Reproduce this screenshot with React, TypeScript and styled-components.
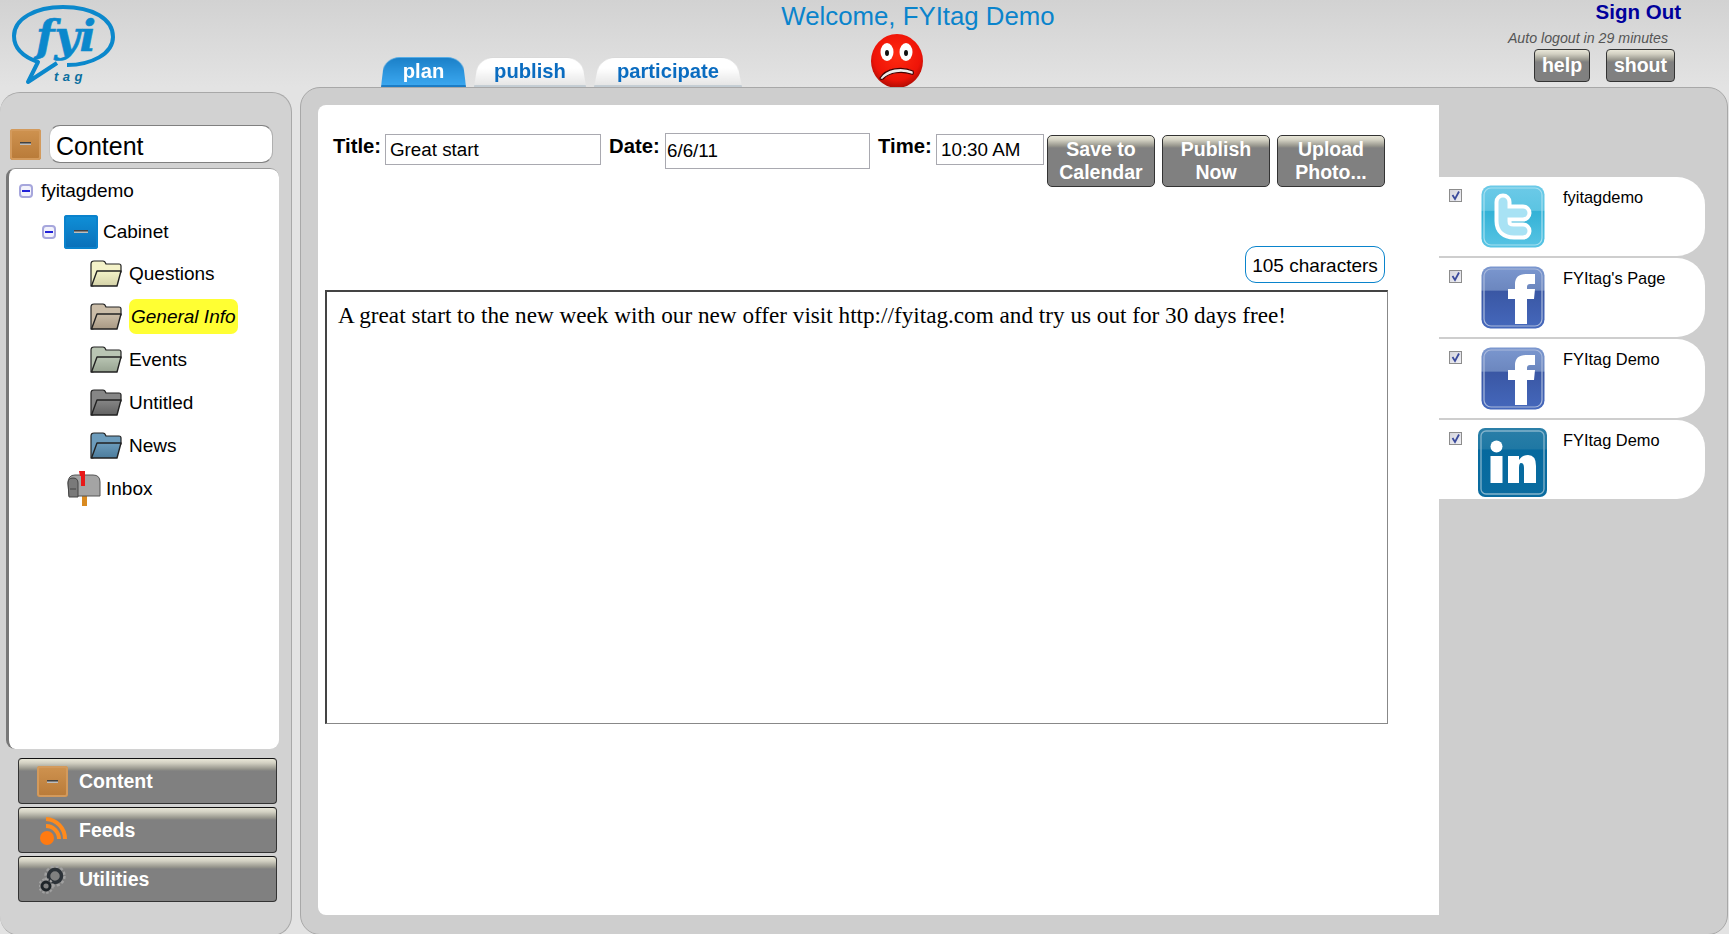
import React from "react";
import styled, { createGlobalStyle } from "styled-components";

const GlobalStyle = createGlobalStyle`
  html, body {
    margin: 0;
    padding: 0;
    width: 1729px;
    height: 934px;
    overflow: hidden;
    background: #e3e3e3;
    font-family: "Liberation Sans", Arial, sans-serif;
    color: #000;
  }
`;

const Page = styled.div`
  width: 1729px;
  height: 934px;
  overflow: hidden;
  background: #e3e3e3;
`;

/* ---------- header ---------- */
const Header = styled.header`
  display: flex;
  height: 87px;
  background: linear-gradient(#d2d2d2, #e3e3e3);
`;
const LogoBox = styled.div`
  width: 105px;
  height: 81px;
  margin: 4px 0 0 11px;
`;
const Tabs = styled.nav`
  display: flex;
  align-self: flex-end;
  width: 367px;
  height: 31px;
  margin-left: 262px;
  gap: 2px;
`;
const Tab = styled.div<{ $active?: boolean; $width: number }>`
  position: relative;
  width: ${(p) => p.$width}px;
  height: 31px;
  line-height: 31px;
  text-align: center;
  font-size: 20.2px;
  font-weight: bold;
  color: ${(p) => (p.$active ? "#fff" : "#0a6cc0")};
  &::before {
    content: "";
    position: absolute;
    inset: -2px 3px 0;
    border-radius: 16px 16px 0 0;
    transform: perspective(50px) rotateX(8deg);
    transform-origin: bottom;
    background: ${(p) =>
      p.$active ? "linear-gradient(#1b80c8, #3aa6ee)" : "linear-gradient(#fff, #fff 40%, #e6e6e6)"};
    border-top: 1px solid ${(p) => (p.$active ? "#58aee6" : "#d8d8d8")};
    border-bottom: 2px solid ${(p) => (p.$active ? "#1c7cc4" : "#c4cdd4")};
    box-sizing: border-box;
  }
`;
const TabLabel = styled.span`
  position: relative;
`;
const Center = styled.div`
  display: flex;
  flex-direction: column;
  align-items: center;
  width: 346px;
`;
const Welcome = styled.div`
  margin-top: 2px;
  font-size: 25.8px;
  line-height: 29px;
  color: #0a84cc;
  white-space: nowrap;
`;
const SmileyBox = styled.div`
  margin: 3px 42px 0 0;
`;
const Account = styled.div`
  display: flex;
  flex-direction: column;
  align-items: flex-end;
  margin-left: auto;
  padding-right: 54px;
`;
const SignOut = styled.div`
  margin: 1px -6px 0 0;
  font-size: 20.5px;
  line-height: 22px;
  font-weight: bold;
  color: #00009c;
`;
const AutoLogout = styled.div`
  margin: 7px 7px 0 0;
  font-size: 14.2px;
  line-height: 16px;
  font-style: italic;
  color: #555;
`;
const HeaderButtons = styled.div`
  display: flex;
  gap: 16px;
  margin-top: 3px;
`;
const glossBackground = "linear-gradient(#e9e7d8, #d2d0c2 4px, #96958c 10px, #808080 12px)";
const SmallButton = styled.div<{ $width: number }>`
  box-sizing: border-box;
  width: ${(p) => p.$width}px;
  height: 33px;
  line-height: 30px;
  text-align: center;
  border: 1px solid #333;
  border-radius: 4px;
  background: ${glossBackground};
  color: #fff;
  font-size: 19.5px;
  font-weight: bold;
`;

/* ---------- body ---------- */
const Body = styled.div`
  display: flex;
  align-items: flex-start;
`;
const LeftPanel = styled.aside`
  box-sizing: border-box;
  width: 292px;
  height: 844px;
  margin-top: 5px;
  padding-top: 32px;
  border: 1px solid #a8a8a8;
  border-left: 0;
  border-radius: 20px;
  background: #d2d2d2;
`;
const ContentHead = styled.div`
  display: flex;
  align-items: center;
  margin-left: 10px;
  gap: 8px;
  height: 38px;
`;
const ContentTitle = styled.div`
  box-sizing: border-box;
  width: 224px;
  height: 38px;
  padding: 2px 0 0 6px;
  line-height: 36px;
  font-size: 25px;
  background: #fff;
  border-top: 1px solid #808080;
  border-bottom: 1px solid #808080;
  border-left: 1px solid #c4c4c4;
  border-right: 1px solid #b0b0b0;
  border-radius: 11px;
`;
const Tree = styled.div`
  box-sizing: border-box;
  width: 273px;
  height: 581px;
  margin: 5px 0 0 6px;
  background: #fff;
  border-left: 3px solid #777;
  border-top: 1px solid #999;
  border-radius: 9px;
`;
const TreeRow = styled.div<{ $indent: number; $gap: number; $tight?: boolean }>`
  display: flex;
  align-items: center;
  height: ${(p) => (p.$tight ? 41 : 43)}px;
  margin-top: ${(p) => (p.$tight ? "-1px" : "0")};
  padding-left: ${(p) => p.$indent}px;
  gap: ${(p) => p.$gap}px;
  font-size: 19px;
`;
const TreeLabel = styled.span<{ $active?: boolean }>`
  ${(p) =>
    p.$active
      ? `
    box-sizing: border-box;
    width: 109px;
    height: 35px;
    line-height: 35px;
    padding-left: 2px;
    font-style: italic;
    white-space: nowrap;
    background: #ffff33;
    border-radius: 7px;
  `
      : ""}
`;
const Expander = styled.span`
  position: relative;
  box-sizing: border-box;
  width: 14px;
  height: 14px;
  border: 2px solid #a6a6dc;
  border-radius: 4px;
  background: #f2f2fb;
  &::after {
    content: "";
    position: absolute;
    left: 1px;
    right: 1px;
    top: 4px;
    height: 2px;
    background: #2222d8;
  }
`;
const Drawer = styled.span<{ $tone: "orange" | "blue" }>`
  position: relative;
  display: block;
  box-sizing: border-box;
  width: ${(p) => (p.$tone === "blue" ? 34 : 31)}px;
  height: ${(p) => (p.$tone === "blue" ? 34 : 31)}px;
  margin-right: ${(p) => (p.$tone === "blue" ? -3 : 0)}px;
  border-radius: 3px;
  background: ${(p) =>
    p.$tone === "blue" ? "linear-gradient(#0f90d8, #0a6fb8)" : "linear-gradient(#cf9350, #b87a38)"};
  box-shadow: inset 0 0 0 2px ${(p) => (p.$tone === "blue" ? "#0a82cc" : "#d39a5c")};
  &::after {
    content: "";
    position: absolute;
    left: 10px;
    right: 10px;
    top: 50%;
    height: 3px;
    margin-top: -2px;
    background: linear-gradient(#222, #ddd);
  }
`;
const NavButtons = styled.div`
  display: flex;
  flex-direction: column;
  gap: 3px;
  width: 259px;
  margin: 9px 0 0 18px;
`;
const NavButton = styled.div`
  box-sizing: border-box;
  display: flex;
  align-items: center;
  height: 46px;
  padding: 1px 0 0 18px;
  gap: 11px;
  border: 1px solid #333;
  border-top-color: #111;
  border-radius: 4px;
  background: ${glossBackground};
  color: #fff;
  font-size: 19.5px;
  font-weight: bold;
`;
const NavIcon = styled.span`
  display: flex;
  justify-content: center;
  width: 31px;
`;

const RightPanel = styled.main`
  box-sizing: border-box;
  display: flex;
  align-items: flex-start;
  width: 1428px;
  height: 848px;
  margin-left: 8px;
  padding: 17px 0 0 17px;
  border: 1px solid #a8a8a8;
  border-radius: 20px;
  background: #cecece;
`;
const Editor = styled.section`
  box-sizing: border-box;
  width: 1121px;
  height: 810px;
  padding: 29px 0 0 15px;
  background: #fff;
  border-radius: 8px 0 0 8px;
`;
const FormRow = styled.div`
  display: flex;
  align-items: flex-start;
  height: 112px;
`;
const FieldLabel = styled.label<{ $left?: number; $width: number }>`
  width: ${(p) => p.$width}px;
  margin: 1px 0 0 ${(p) => p.$left ?? 0}px;
  font-size: 20.3px;
  line-height: 23px;
  font-weight: bold;
`;
const TextField = styled.input<{ $width: number; $tall?: boolean }>`
  box-sizing: border-box;
  width: ${(p) => p.$width}px;
  height: ${(p) => (p.$tall ? 36 : 31)}px;
  margin: ${(p) => (p.$tall ? "-1px" : "0")} 0 0 0;
  padding: ${(p) => (p.$tall ? "0 1px 0" : "1px 4px 0")};
  border: 1px solid #a9a9b0;
  font: 18.8px "Liberation Sans", Arial, sans-serif;
  color: #000;
  background: #fff;
  outline: none;
`;
const ActionButton = styled.div<{ $left: number }>`
  box-sizing: border-box;
  width: 108px;
  height: 52px;
  margin: 1px 0 0 ${(p) => p.$left}px;
  padding-top: 2px;
  text-align: center;
  font-size: 19.5px;
  line-height: 23px;
  font-weight: bold;
  color: #fff;
  border: 1px solid #333;
  border-radius: 5px;
  background: ${glossBackground};
`;
const CountRow = styled.div`
  display: flex;
  justify-content: flex-end;
  width: 1052px;
`;
const CharCount = styled.div`
  box-sizing: border-box;
  width: 140px;
  height: 37px;
  padding-top: 1px;
  line-height: 35px;
  text-align: center;
  font-size: 19px;
  border: 1px solid #0a84cc;
  border-radius: 11px;
`;
const Message = styled.textarea`
  display: block;
  box-sizing: border-box;
  width: 1063px;
  height: 434px;
  margin: 7px 0 0 -8px;
  padding: 10px 11px;
  border-style: solid;
  border-width: 2px 1px 1px 2px;
  border-color: #444 #888 #888 #444;
  font: 23.2px/26px "Liberation Serif", "Times New Roman", serif;
  color: #000;
  resize: none;
  outline: none;
`;
const Accounts = styled.ul`
  display: flex;
  flex-direction: column;
  gap: 2px;
  width: 266px;
  margin: 72px 0 0;
  padding: 0;
  list-style: none;
`;
const AccountRow = styled.li`
  display: grid;
  grid-template-columns: 13px 101px 1fr;
  align-items: start;
  box-sizing: border-box;
  height: 79px;
  padding-left: 10px;
  background: #fff;
  border-radius: 0 28px 28px 0;
`;
const CheckMark = styled.span`
  display: flex;
  align-items: center;
  justify-content: center;
  box-sizing: border-box;
  width: 13px;
  height: 13px;
  margin-top: 12px;
  border: 1px solid #8c8c8c;
  background: linear-gradient(135deg, #d4d4dc, #f0f0f4);
`;
const IconCell = styled.span`
  display: flex;
  justify-content: center;
  padding-top: 8px;
`;
const AccountName = styled.span`
  margin-top: 10px;
  font-size: 16.4px;
  line-height: 20px;
  white-space: nowrap;
`;
const SvgBlock = styled.svg`
  display: block;
  flex: none;
`;
const LinkedInSvg = styled(SvgBlock)`
  margin-top: 0;
`;

/* ---------- drawings ---------- */
const Logo = () => (
  <SvgBlock width="105" height="81" viewBox="0 0 105 81">
    <path
      d="M46 59 L17 78 L27 58 C10 52 3 43 3 32 C3 15 24 3 52 3 C82 3 102 15 102 33 C102 50 80 61 56 61"
      fill="none"
      stroke="#0b88cc"
      strokeWidth="4"
      strokeLinejoin="round"
    />
    <text
      x="25"
      y="47"
      fill="#0b88cc"
      stroke="#0b88cc"
      strokeWidth="0.6"
      fontFamily="'DejaVu Serif', serif"
      fontStyle="italic"
      fontWeight="bold"
      fontSize="42"
      textLength="60"
      lengthAdjust="spacingAndGlyphs"
    >
      fyi
    </text>
    <text x="43" y="77" fill="#0b6f9f" fontFamily="'Liberation Sans', sans-serif" fontStyle="italic" fontWeight="bold" fontSize="13" letterSpacing="4.5">
      tag
    </text>
  </SvgBlock>
);

const Smiley = () => (
  <SvgBlock width="54" height="54" viewBox="0 0 54 54">
    <defs>
      <radialGradient id="ball" cx="0.5" cy="0.4" r="0.6">
        <stop offset="0" stopColor="#ff2a10" />
        <stop offset="0.75" stopColor="#ee1408" />
        <stop offset="1" stopColor="#b00c04" />
      </radialGradient>
    </defs>
    <ellipse cx="27" cy="27" rx="26" ry="27" fill="url(#ball)" />
    <ellipse cx="17" cy="18" rx="6.5" ry="9" fill="#fff" />
    <ellipse cx="36" cy="18" rx="6.5" ry="9" fill="#fff" />
    <ellipse cx="17" cy="19" rx="2" ry="3" fill="#111" />
    <ellipse cx="36" cy="19" rx="2" ry="3" fill="#111" />
    <path d="M10 44 C16 34 32 32 43 37 C44 40 43 41 41 40 C32 37 20 38 13 45 C11 46 10 45 10 44 Z" fill="#eee" stroke="#400" strokeWidth="1.2" />
  </SvgBlock>
);

const Folder = ({ id, tint, shade }: { id: string; tint: string; shade: string }) => (
  <SvgBlock width="32" height="27" viewBox="0 0 32 27">
    <defs>
      <linearGradient id={id} x1="0" y1="0" x2="0" y2="1">
        <stop offset="0" stopColor={tint} />
        <stop offset="1" stopColor={shade} />
      </linearGradient>
    </defs>
    <path d="M1 26 V4 Q1 1 4 1 H13 Q15 1 16 4 H29 Q31 4 31 6 V12 H8 L3 26 Z" fill={tint} stroke="#222" strokeWidth="1.2" />
    <path d="M7 11 H31 L27 26 H1.5 Z" fill={`url(#${id})`} stroke="#222" strokeWidth="1.4" strokeLinejoin="round" />
  </SvgBlock>
);

const Mailbox = () => (
  <SvgBlock width="34" height="35" viewBox="0 0 34 35">
    <rect x="15" y="24" width="5" height="11" fill="#d98a20" />
    <path d="M1 12 Q1 4 8 4 H26 Q33 4 33 11 V25 H2 Z" fill="#a4a4a4" stroke="#555" />
    <path d="M1 12 Q1 7 6 7 Q11 7 11 12 V26 H2 Z" fill="#7a7a7a" stroke="#444" />
    <path d="M3 18 H9" stroke="#444" strokeWidth="1" />
    <rect x="14" y="1" width="4" height="14" fill="#e81818" />
    <path d="M12 0 H18 V5 H13 Z" fill="#e81818" />
  </SvgBlock>
);

const Rss = () => (
  <SvgBlock width="28" height="28" viewBox="0 0 28 28">
    <circle cx="8" cy="21" r="7" fill="#ff7a10" />
    <path d="M7 9 A13 13 0 0 1 20 22" fill="none" stroke="#ff8a1c" strokeWidth="4" />
    <path d="M7 2 A20 20 0 0 1 26 22" fill="none" stroke="#ff8a1c" strokeWidth="4" />
  </SvgBlock>
);

const Gears = () => (
  <SvgBlock width="27" height="29" viewBox="0 0 27 29">
    <circle cx="16" cy="11" r="9.5" fill="none" stroke="#a0a0a0" strokeWidth="2.5" strokeDasharray="3 2" />
    <circle cx="16" cy="11" r="6.5" fill="none" stroke="#2c3238" strokeWidth="3.5" />
    <circle cx="7" cy="21" r="6.8" fill="none" stroke="#a0a0a0" strokeWidth="2" strokeDasharray="2.5 1.5" />
    <circle cx="7" cy="21" r="4" fill="none" stroke="#1e2428" strokeWidth="2.8" />
  </SvgBlock>
);

const Twitter = () => (
  <SvgBlock width="64" height="64" viewBox="0 0 64 64">
    <defs>
      <linearGradient id="twBg" x1="0" y1="0" x2="0" y2="1">
        <stop offset="0" stopColor="#6ccae8" />
        <stop offset="0.4" stopColor="#5cc4e2" />
        <stop offset="0.42" stopColor="#33b2d6" />
        <stop offset="1" stopColor="#58c4e4" />
      </linearGradient>
    </defs>
    <rect x="0.5" y="0.5" width="63" height="62" rx="9" fill="url(#twBg)" />
    <rect x="3" y="3" width="58" height="57" rx="7" fill="none" stroke="#a6e0f0" strokeWidth="1.2" />
    <path d="M22 17 V36 Q22 46 33 46 H42 M22 28 H42" fill="none" stroke="#fff" strokeWidth="17" strokeLinecap="round" />
    <path d="M22 17 V36 Q22 46 33 46 H42 M22 28 H42" fill="none" stroke="#a8e2f4" strokeWidth="9" strokeLinecap="round" />
  </SvgBlock>
);

const Facebook = ({ id }: { id: string }) => (
  <SvgBlock width="64" height="64" viewBox="0 0 64 64">
    <defs>
      <linearGradient id={id} x1="0" y1="0" x2="0" y2="1">
        <stop offset="0" stopColor="#7b97cf" />
        <stop offset="0.38" stopColor="#6c87bf" />
        <stop offset="0.4" stopColor="#3a57a4" />
        <stop offset="1" stopColor="#4568bc" />
      </linearGradient>
    </defs>
    <rect x="0.5" y="0.5" width="63" height="62" rx="9" fill={`url(#${id})`} />
    <rect x="3" y="3" width="58" height="57" rx="7" fill="none" stroke="#a9b9dc" strokeWidth="1.2" />
    <path d="M34 58 V33 H27 V23 H34 V18 Q34 8 45 8 H54 V18 H49 Q46 18 46 21 V23 H54 L53 33 H46 V58 Z" fill="#fff" />
  </SvgBlock>
);

const LinkedIn = () => (
  <LinkedInSvg width="69" height="69" viewBox="0 0 69 69">
    <defs>
      <linearGradient id="inBg" x1="0" y1="0" x2="0" y2="1">
        <stop offset="0" stopColor="#2b7fa8" />
        <stop offset="0.3" stopColor="#1f78a4" />
        <stop offset="0.32" stopColor="#06699e" />
        <stop offset="1" stopColor="#0a6ca0" />
      </linearGradient>
    </defs>
    <rect x="0" y="0" width="69" height="69" rx="7" fill="url(#inBg)" />
    <rect x="3" y="3" width="63" height="63" rx="5" fill="none" stroke="#84b4cc" strokeWidth="1.3" />
    <circle cx="18.5" cy="18.5" r="6" fill="#fff" />
    <rect x="12.5" y="28" width="12" height="27" fill="#fff" />
    <path d="M30 28 H41 V32 Q44 27 50 27 Q58 27 58 38 V55 H46 V40 Q46 35 43 35 Q41 35 41 40 V55 H30 Z" fill="#fff" />
  </LinkedInSvg>
);

const Check = () => (
  <svg width="11" height="11" viewBox="0 0 11 11">
    <path d="M2.5 5 L5 9 L9 1.5" fill="none" stroke="#3a4a9c" strokeWidth="1.8" />
  </svg>
);

const folders = [
  { name: "Questions", tint: "#f4f2c8", shade: "#d4d2a8" },
  { name: "General Info", tint: "#cbbda8", shade: "#a89984", active: true },
  { name: "Events", tint: "#b9c5b3", shade: "#97a391" },
  { name: "Untitled", tint: "#868686", shade: "#626262" },
  { name: "News", tint: "#6c9cbc", shade: "#4c7c9c" },
];

const accounts = [
  { name: "fyitagdemo", icon: <Twitter /> },
  { name: "FYItag's Page", icon: <Facebook id="fbA" /> },
  { name: "FYItag Demo", icon: <Facebook id="fbB" /> },
  { name: "FYItag Demo", icon: <LinkedIn /> },
];

const App: React.FC = () => (
  <Page>
    <GlobalStyle />
    <Header>
      <LogoBox>
        <Logo />
      </LogoBox>
      <Tabs>
        <Tab $active $width={91}>
          <TabLabel>plan</TabLabel>
        </Tab>
        <Tab $width={118}>
          <TabLabel>publish</TabLabel>
        </Tab>
        <Tab $width={154}>
          <TabLabel>participate</TabLabel>
        </Tab>
      </Tabs>
      <Center>
        <Welcome>Welcome, FYItag Demo</Welcome>
        <SmileyBox>
          <Smiley />
        </SmileyBox>
      </Center>
      <Account>
        <SignOut>Sign Out</SignOut>
        <AutoLogout>Auto logout in 29 minutes</AutoLogout>
        <HeaderButtons>
          <SmallButton $width={56}>help</SmallButton>
          <SmallButton $width={69}>shout</SmallButton>
        </HeaderButtons>
      </Account>
    </Header>
    <Body>
      <LeftPanel>
        <ContentHead>
          <Drawer $tone="orange" />
          <ContentTitle>Content</ContentTitle>
        </ContentHead>
        <Tree>
          <TreeRow $indent={10} $gap={8}>
            <Expander />
            <TreeLabel>fyitagdemo</TreeLabel>
          </TreeRow>
          <TreeRow $indent={33} $gap={8} $tight>
            <Expander />
            <Drawer $tone="blue" />
            <TreeLabel>Cabinet</TreeLabel>
          </TreeRow>
          {folders.map((f) => (
            <TreeRow key={f.name} $indent={81} $gap={7}>
              <Folder id={`folder-${f.name.charAt(0)}`} tint={f.tint} shade={f.shade} />
              <TreeLabel $active={f.active}>{f.name}</TreeLabel>
            </TreeRow>
          ))}
          <TreeRow $indent={58} $gap={5}>
            <Mailbox />
            <TreeLabel>Inbox</TreeLabel>
          </TreeRow>
        </Tree>
        <NavButtons>
          <NavButton>
            <NavIcon>
              <Drawer $tone="orange" />
            </NavIcon>
            Content
          </NavButton>
          <NavButton>
            <NavIcon>
              <Rss />
            </NavIcon>
            Feeds
          </NavButton>
          <NavButton>
            <NavIcon>
              <Gears />
            </NavIcon>
            Utilities
          </NavButton>
        </NavButtons>
      </LeftPanel>
      <RightPanel>
        <Editor>
          <FormRow>
            <FieldLabel $width={52}>Title:</FieldLabel>
            <TextField $width={216} defaultValue="Great start" />
            <FieldLabel $left={8} $width={56}>
              Date:
            </FieldLabel>
            <TextField $tall $width={205} defaultValue="6/6/11" />
            <FieldLabel $left={8} $width={58}>
              Time:
            </FieldLabel>
            <TextField $width={108} defaultValue="10:30 AM" />
            <ActionButton $left={3}>
              Save to
              <br />
              Calendar
            </ActionButton>
            <ActionButton $left={7}>
              Publish
              <br />
              Now
            </ActionButton>
            <ActionButton $left={7}>
              Upload
              <br />
              Photo...
            </ActionButton>
          </FormRow>
          <CountRow>
            <CharCount>105 characters</CharCount>
          </CountRow>
          <Message
            readOnly
            defaultValue="A great start to the new week with our new offer visit http://fyitag.com and try us out for 30 days free!"
          />
        </Editor>
        <Accounts>
          {accounts.map((a, i) => (
            <AccountRow key={i}>
              <CheckMark>
                <Check />
              </CheckMark>
              <IconCell>{a.icon}</IconCell>
              <AccountName>{a.name}</AccountName>
            </AccountRow>
          ))}
        </Accounts>
      </RightPanel>
    </Body>
  </Page>
);

export default App;
